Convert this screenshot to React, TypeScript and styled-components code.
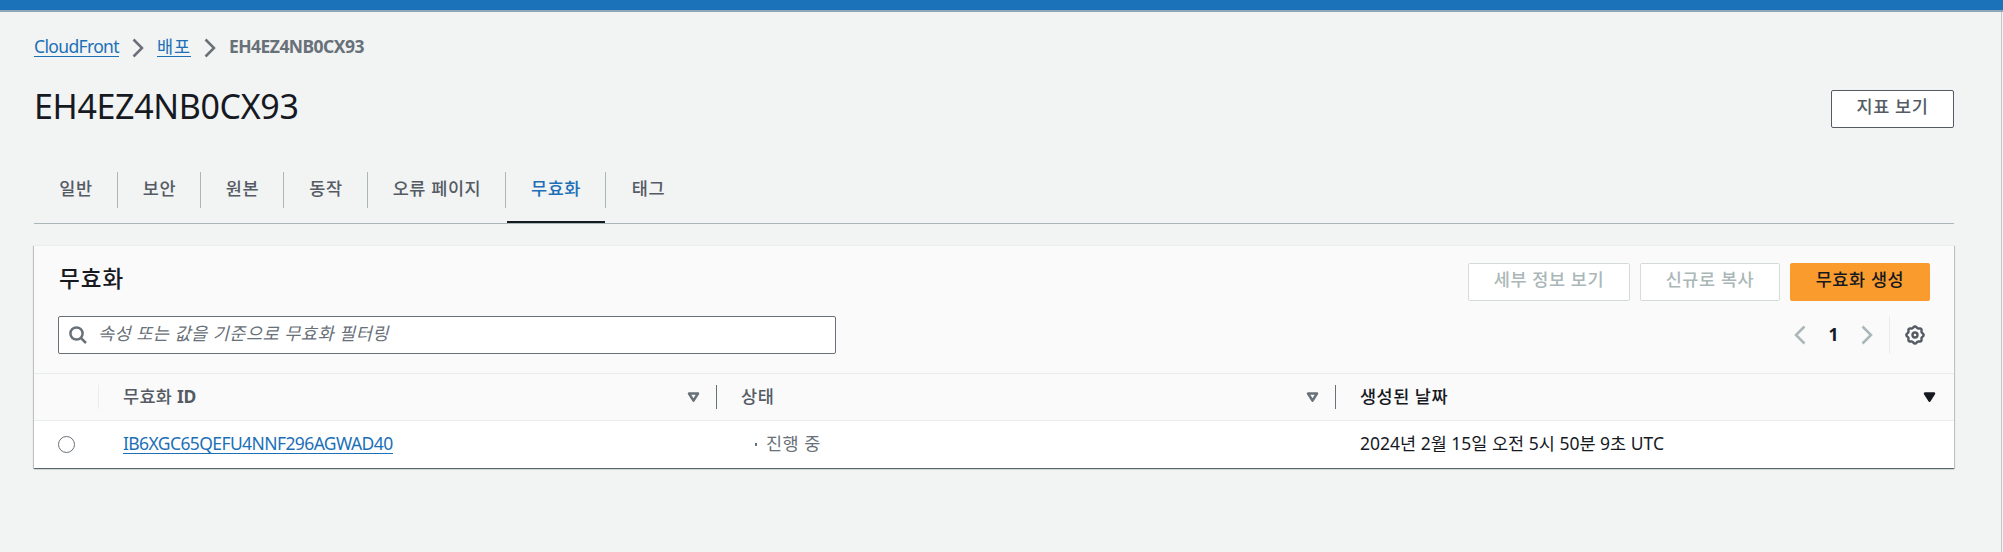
import React from "react";
import styled, { createGlobalStyle } from "styled-components";

const Global = createGlobalStyle`
  * { box-sizing: border-box; }
  body {
    margin: 0;
    background: #f2f3f3;
    color: #16191f;
    font-family: "Noto Sans", "Noto Sans CJK KR", sans-serif;
    font-size: 17.5px;
    line-height: 28px;
  }
`;

const Page = styled.div`
  height: 552px;
  overflow: hidden;
  display: flex;
  flex-direction: column;
`;

const TopBar = styled.div`
  height: 12px;
  flex: none;
  background: #1b72b8;
  border-bottom: 2px solid #8fa6b8;
`;

const Content = styled.main`
  flex: 1;
  width: 2002px;
  border-right: 1px solid #c4c8c9;
  padding: 20px 47px 0 34px;
`;

const Label = styled.span<{ $track?: number }>`
  display: inline-block;
  white-space: nowrap;
  letter-spacing: ${(p) => p.$track ?? 0}px;
`;

const Breadcrumbs = styled.nav`
  display: flex;
  align-items: center;
  height: 28px;
`;

const Link = styled.a<{ $width: number; $track?: number }>`
  width: ${(p) => p.$width}px;
  height: 22px;
  line-height: 23px;
  color: #1b70b8;
  border-bottom: 1px solid #1b70b8;
  white-space: nowrap;
  letter-spacing: ${(p) => p.$track ?? 0}px;
`;

const CrumbSeparator = styled.svg`
  width: 12px;
  height: 20px;
  margin: 3px 13px 0;
  flex: none;
`;

const Current = styled(Label)`
  color: #687078;
  font-weight: 700;
`;

const TitleRow = styled.header`
  display: flex;
  justify-content: space-between;
  align-items: flex-start;
  margin-top: 30px;
  height: 73px;
`;

const Title = styled.h1`
  margin: -6px 0 0;
  font-size: 34px;
  line-height: 45px;
  font-weight: 400;
  letter-spacing: -0.35px;
`;

type Kind = "normal" | "disabled" | "primary";
const kinds: Record<Kind, string> = {
  normal: "background:#fff;border-color:#545b64;color:#545b64;",
  disabled: "background:#fff;border-color:#d5dbdb;color:#aab7b8;",
  primary: "background:#fa9c2d;border-color:#fa9c2d;color:#16191f;",
};

const Button = styled.button<{ $kind: Kind; $width: number }>`
  width: ${(p) => p.$width}px;
  height: 38px;
  padding: 0 0 6px;
  border: 1px solid;
  border-radius: 2px;
  font: 500 17.5px/28px "Noto Sans", "Noto Sans CJK KR", sans-serif;
  ${(p) => kinds[p.$kind]}
`;

const Tabs = styled.div`
  display: flex;
  height: 61px;
  border-bottom: 1px solid #aab7b8;
`;

const Tab = styled.div<{ $width: number; $active?: boolean; $last?: boolean }>`
  position: relative;
  width: ${(p) => p.$width}px;
  height: 36px;
  margin-top: 9px;
  padding: 0 0 4px 1px;
  display: flex;
  align-items: center;
  justify-content: center;
  font-weight: 500;
  color: ${(p) => (p.$active ? "#1b70b8" : "#545b64")};
  border-right: ${(p) => (p.$last ? "none" : "1px solid #aab7b8")};
  &::after {
    content: "";
    display: ${(p) => (p.$active ? "block" : "none")};
    position: absolute;
    left: 1px;
    right: 0;
    bottom: -15px;
    height: 2px;
    background: #16191f;
  }
`;

const Card = styled.section`
  margin-top: 21px;
  height: 223px;
  background: #fff;
  border-top: 1px solid #eaeded;
  box-shadow: 0 1px 1px 0 rgba(0, 28, 36, 0.5), 1px 1px 1px 0 rgba(0, 28, 36, 0.15),
    -1px 1px 1px 0 rgba(0, 28, 36, 0.15);
`;

const CardHeader = styled.div`
  height: 128px;
  background: #fafafa;
  border-bottom: 1px solid #eaeded;
  padding: 17px 24px 0;
`;

const CardRow = styled.div`
  display: flex;
  justify-content: space-between;
  height: 53px;
`;

const CardTitle = styled.h2`
  margin: 1px 0 0 1px;
  font-size: 22.5px;
  line-height: 30px;
  font-weight: 500;
  letter-spacing: 1px;
`;

const Actions = styled.div`
  display: flex;
  gap: 10px;
`;

const Search = styled.div`
  width: 778px;
  height: 38px;
  display: flex;
  align-items: center;
  background: #fff;
  border: 1px solid #687078;
  border-radius: 2px;
  padding-left: 10px;
  gap: 11px;
  color: #687078;
  font-style: italic;
`;

const Placeholder = styled(Label)`
  padding-bottom: 4px;
`;

const Pager = styled.div`
  display: flex;
  align-items: center;
  height: 38px;
  margin-right: 5px;
  font-weight: 700;
`;

const PageNumber = styled.span`
  width: 55px;
  text-align: center;
  padding-bottom: 2px;
`;

const PagerDivider = styled.span`
  width: 1px;
  height: 38px;
  background: #eaeded;
  margin: 0 15px 0 16px;
`;

const Row = styled.div<{ $head?: boolean }>`
  display: grid;
  grid-template-columns: 65px 618px 619px 618px;
  height: 47px;
  background: ${(p) => (p.$head ? "#fafafa" : "#fff")};
  border-bottom: ${(p) => (p.$head ? "1px solid #eaeded" : "none")};
`;

const HeadCell = styled.div<{ $divider?: string; $active?: boolean }>`
  display: flex;
  align-items: center;
  justify-content: space-between;
  height: 24px;
  margin-top: 11px;
  padding: 0 ${(p) => (p.$active ? 17 : 16)}px 0 24px;
  font-weight: 700;
  color: ${(p) => (p.$active ? "#16191f" : "#545b64")};
  border-right: 1px solid ${(p) => p.$divider ?? "transparent"};
  & > span { font-weight: 500; padding-bottom: 3px; }
  & b { font-weight: 700; letter-spacing: -0.4px; }
`;

const Cell = styled.div`
  display: flex;
  align-items: center;
  padding: 0 0 3px 24px;
`;

const Radio = styled.span`
  width: 17px;
  height: 17px;
  margin-top: 3px;
  border: 1.5px solid #687078;
  border-radius: 50%;
`;

const Status = styled.span`
  display: flex;
  align-items: center;
  gap: 9px;
  margin-left: 14px;
  color: #687078;
`;

const Dot = styled.i`
  width: 2px;
  height: 3px;
  margin-top: 3px;
  background: #687078;
`;

const Chevron = ({ left }: { left?: boolean }) => (
  <svg width="12" height="20" viewBox="0 0 12 20" fill="none" stroke="#aab7b8" strokeWidth="2.5">
    <path d={left ? "M10.5 1.5 2 10l8.5 8.5" : "M1.5 1.5 10 10l-8.5 8.5"} />
  </svg>
);

const Crumb = () => (
  <CrumbSeparator viewBox="0 0 12 20" fill="none" stroke="#687078" strokeWidth="2.5">
    <path d="M1.5 1.5 10 10l-8.5 8.5" />
  </CrumbSeparator>
);

const SortIcon = ({ filled }: { filled?: boolean }) => (
  <svg width="13" height="12" viewBox="0 0 13 12">
    <path
      d="M2 2.5h9L6.5 9.7z"
      fill={filled ? "#16191f" : "none"}
      stroke={filled ? "#16191f" : "#687078"}
      strokeWidth="2.5"
      strokeLinejoin="round"
    />
  </svg>
);

const SearchIcon = () => (
  <svg width="18" height="18" viewBox="0 0 18 18" fill="none" stroke="#687078" strokeWidth="2.5">
    <circle cx="7.5" cy="7.5" r="6.1" />
    <path d="m11.8 11.8 5.2 5.2" />
  </svg>
);

const gearPath = Array.from({ length: 64 }, (_, i) => {
  const a = (i / 64) * Math.PI * 2;
  const r = 7.9 + 0.75 * Math.cos(a * 8);
  return `${i ? "L" : "M"}${(10 + r * Math.sin(a)).toFixed(2)} ${(10 - r * Math.cos(a)).toFixed(2)}`;
}).join("") + "Z";

const GearIcon = () => (
  <svg width="20" height="20" viewBox="0 0 20 20" fill="none" stroke="#545b64" strokeWidth="2.4">
    <path d={gearPath} strokeLinejoin="round" />
    <circle cx="10" cy="10" r="2.5" />
  </svg>
);

const tabs = [
  { label: "일반", width: 84 },
  { label: "보안", width: 83 },
  { label: "원본", width: 83 },
  { label: "동작", width: 84 },
  { label: "오류 페이지", width: 138 },
  { label: "무효화", width: 100, active: true },
  { label: "태그", width: 84 },
];

export default function App() {
  return (
    <Page>
      <Global />
      <TopBar />
      <Content>
        <Breadcrumbs>
          <Link $width={85} $track={-0.65}>CloudFront</Link>
          <Crumb />
          <Link $width={34} $track={0.8}>배포</Link>
          <Crumb />
          <Current $track={-0.55}>EH4EZ4NB0CX93</Current>
        </Breadcrumbs>
        <TitleRow>
          <Title>EH4EZ4NB0CX93</Title>
          <Button $kind="normal" $width={123}><Label $track={0.6}>지표 보기</Label></Button>
        </TitleRow>
        <Tabs>
          {tabs.map((t, i) => (
            <Tab key={t.label} $width={t.width} $active={t.active} $last={i === tabs.length - 1}>
              <Label $track={0.6}>{t.label}</Label>
            </Tab>
          ))}
        </Tabs>
        <Card>
          <CardHeader>
            <CardRow>
              <CardTitle>무효화</CardTitle>
              <Actions>
                <Button $kind="disabled" $width={162}><Label $track={0.6}>세부 정보 보기</Label></Button>
                <Button $kind="disabled" $width={140}><Label $track={0.6}>신규로 복사</Label></Button>
                <Button $kind="primary" $width={140}><Label $track={0.6}>무효화 생성</Label></Button>
              </Actions>
            </CardRow>
            <CardRow>
              <Search>
                <SearchIcon />
                <Placeholder $track={0.5}>속성 또는 값을 기준으로 무효화 필터링</Placeholder>
              </Search>
              <Pager>
                <Chevron left />
                <PageNumber>1</PageNumber>
                <Chevron />
                <PagerDivider />
                <GearIcon />
              </Pager>
            </CardRow>
          </CardHeader>
          <Row $head>
            <HeadCell $divider="#eaeded" />
            <HeadCell $divider="#687078"><Label $track={0.3}>무효화 <b>ID</b></Label><SortIcon /></HeadCell>
            <HeadCell $divider="#687078"><Label $track={0.6}>상태</Label><SortIcon /></HeadCell>
            <HeadCell $active><Label $track={0.5}>생성된 날짜</Label><SortIcon filled /></HeadCell>
          </Row>
          <Row>
            <Cell><Radio /></Cell>
            <Cell><Link $width={270} $track={-0.6}>IB6XGC65QEFU4NNF296AGWAD40</Link></Cell>
            <Cell><Status><Dot /><Label $track={0.5}>진행 중</Label></Status></Cell>
            <Cell><Label>2024년 2월 15일 오전 5시 50분 9초 UTC</Label></Cell>
          </Row>
        </Card>
      </Content>
    </Page>
  );
}
